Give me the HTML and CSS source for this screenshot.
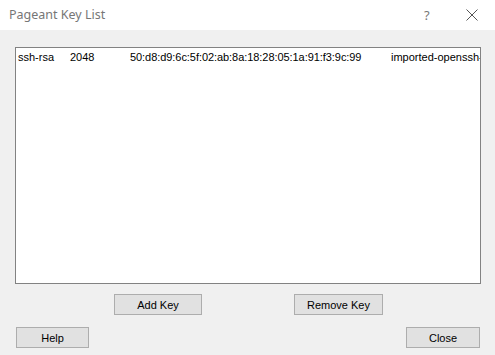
FILE: index.html
```html
<!DOCTYPE html>
<html lang="en">
<head>
  <meta charset="UTF-8">
  <title>Pageant Key List</title>
  <link rel="stylesheet" href="styles.css">
</head>
<body>

  <div class="titlebar">
    <span class="title">Pageant Key List</span>
    <span class="help-btn">?</span>
    <span class="close-btn">
      <svg width="12" height="12" viewBox="0 0 12 12">
        <path d="M0.5 0.5 L11.5 11.5 M11.5 0.5 L0.5 11.5" stroke="#555" stroke-width="1" fill="none"/>
      </svg>
    </span>
  </div>

  <div class="dialog">
    <div class="keylist">
      <div class="key-row">
        <span class="col-type">ssh-rsa</span>
        <span class="col-bits">2048</span>
        <span class="col-fp">50:d8:d9:6c:5f:02:ab:8a:18:28:05:1a:91:f3:9c:99</span>
        <span class="col-comment">imported-openssh-key</span>
      </div>
    </div>

    <div class="key-buttons">
      <button class="btn add-key">Add Key</button>
      <button class="btn remove-key">Remove Key</button>
    </div>

    <div class="bottom-buttons">
      <button class="btn help">Help</button>
      <button class="btn close">Close</button>
    </div>
  </div>

</body>
</html>
```

FILE: styles.css
```css
html, body {
  margin: 0;
  padding: 0;
}
body {
  width: 495px;
  height: 355px;
  background-color: #f0f0f0;
  font-family: "Liberation Sans", Arial, sans-serif;
  font-size: 11px;
  color: #000;
  overflow: hidden;
}
.titlebar {
  height: 30px;
  background-color: #fff;
  display: flex;
  align-items: center;
  position: relative;
}
.title {
  margin-left: 9px;
  font-family: "Noto Sans", "Noto Sans CJK KR", sans-serif;
  font-size: 12.5px;
  color: #767676;
  margin-top: -1px;
}
.help-btn {
  position: absolute;
  left: 424px;
  top: 6px;
  font-family: "Noto Sans", sans-serif;
  font-size: 13px;
  color: #777;
}
.close-btn {
  position: absolute;
  left: 466px;
  top: 9px;
  width: 12px;
  height: 12px;
}
.close-btn svg {
  display: block;
}
.dialog {
  padding: 17px 15px 0 15px;
}
.keylist {
  width: 464px;
  height: 235px;
  background-color: #fff;
  border: 1px solid #828282;
  overflow: hidden;
}
.key-row {
  display: flex;
  white-space: nowrap;
  padding: 2px 0 0 2px;
  height: 14px;
  line-height: 14px;
}
.col-type {
  width: 52px;
  flex-shrink: 0;
}
.col-bits {
  width: 60px;
  flex-shrink: 0;
}
.col-fp {
  width: 261px;
  flex-shrink: 0;
  letter-spacing: -0.06px;
}
.col-comment {
  flex-shrink: 0;
}
.btn {
  font-family: "Liberation Sans", Arial, sans-serif;
  font-size: 11px;
  color: #000;
  background-color: #e1e1e1;
  border: 1px solid #adadad;
  height: 21px;
  padding: 0;
  margin: 0;
}
.key-buttons {
  display: flex;
  margin-top: 10px;
  padding-left: 99px;
  gap: 92px;
}
.add-key {
  width: 88px;
}
.remove-key {
  width: 89px;
}
.bottom-buttons {
  display: flex;
  justify-content: space-between;
  margin-top: 12px;
  padding-left: 1px;
}
.help {
  width: 73px;
}
.close {
  width: 74px;
}
```
